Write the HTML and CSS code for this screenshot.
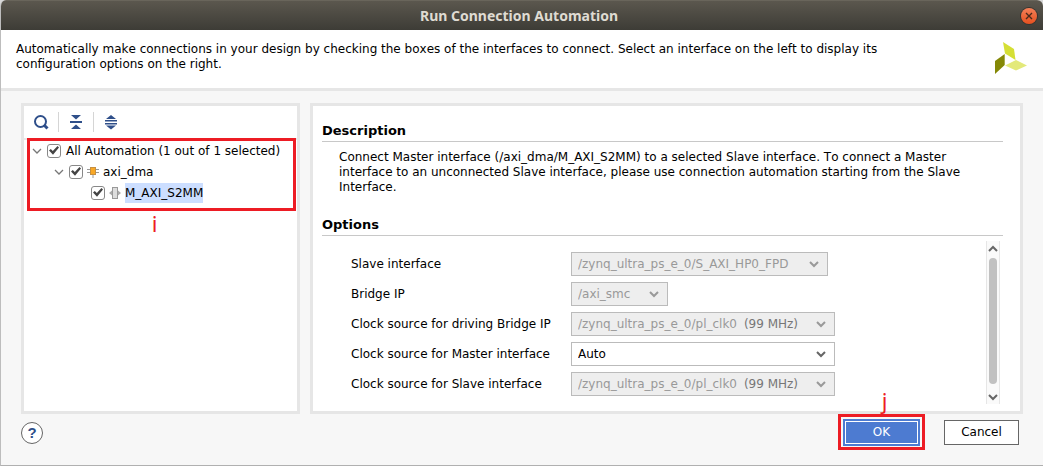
FILE: index.html
```html
<!DOCTYPE html>
<html lang="en">
<head>
<meta charset="utf-8">
<title>Run Connection Automation</title>
<link rel="stylesheet" href="styles.css">
</head>
<body>
<div class="dialog">
  <header class="titlebar">
    <h1 class="title">Run Connection Automation</h1>
    <button class="close" type="button" aria-label="Close">
      <svg width="8" height="8" viewBox="0 0 8 8"><path d="M1 1L7 7M7 1L1 7" stroke="#4a2a1c" stroke-width="1.4"/></svg>
    </button>
  </header>

  <section class="intro">
    <p class="intro-text">Automatically make connections in your design by checking the boxes of the interfaces to connect. Select an interface on the left to display its configuration options on the right.</p>
    <svg class="logo" width="32" height="32" viewBox="0 0 32 32" aria-hidden="true">
      <path d="M8 0L19 7L20.500 18L10 11.500Z" fill="#d5df35"/>
      <path d="M9.700 12V23L0 32V19Z" fill="#848806"/>
      <path d="M10 23.500L21 18L32 23.500L21 28.500Z" fill="#e3e97a"/>
    </svg>
  </section>

  <main class="content">
    <section class="panel tree-panel">
      <div class="toolbar">
        <button class="tool" type="button" aria-label="Search">
          <svg width="16" height="16" viewBox="0 0 16 16"><circle cx="7.500" cy="7.500" r="5.500" fill="none" stroke="#2f4f8a" stroke-width="2"/><path d="M11 11L14.500 14.500" stroke="#2f4f8a" stroke-width="3"/></svg>
        </button>
        <button class="tool" type="button" aria-label="Collapse all">
          <svg width="16" height="16" viewBox="0 0 16 16" fill="#2f4f8a"><path d="M3 1H13L8 5.500ZM2 7H14V9H2ZM8 10.500L13 15H3Z"/></svg>
        </button>
        <button class="tool" type="button" aria-label="Expand all">
          <svg width="16" height="16" viewBox="0 0 16 16" fill="#2f4f8a"><path d="M8 1L13 5H3ZM2 6H14V7.500H2ZM2 9H14V10.500H2ZM3 11.500H13L8 15.500Z"/></svg>
        </button>
      </div>
      <div class="tree">
        <div class="node">
          <svg class="twist" width="10" height="6" viewBox="0 0 10 6"><path d="M1 1L5 5L9 1" fill="none" stroke="#777" stroke-width="1.300"/></svg>
          <input class="check" type="checkbox" id="all" checked>
          <label class="node-label" for="all">All Automation (1 out of 1 selected)</label>
        </div>
        <div class="node level-1">
          <svg class="twist" width="10" height="6" viewBox="0 0 10 6"><path d="M1 1L5 5L9 1" fill="none" stroke="#777" stroke-width="1.300"/></svg>
          <input class="check" type="checkbox" id="dma" checked>
          <svg class="kind" width="12" height="12" viewBox="0 0 12 12"><path d="M0 3.500H12M0 6.500H12M6 9V12" stroke="#999"/><rect x="3.500" y="1.500" width="5" height="7" fill="#f9a825" stroke="#c69042"/></svg>
          <label class="node-label" for="dma">axi_dma</label>
        </div>
        <div class="node level-2">
          <input class="check" type="checkbox" id="s2mm" checked>
          <svg class="kind" width="12" height="12" viewBox="0 0 12 12"><path d="M0 6L3 3.500V8.500ZM12 6L9 3.500V8.500Z" fill="#aaa"/><rect x="3.500" y=".5" width="5" height="11" fill="#ddd" stroke="#999"/></svg>
          <label class="node-label selected" for="s2mm">M_AXI_S2MM</label>
        </div>
        <div class="callout callout-tree"><span class="callout-mark">i</span></div>
      </div>
    </section>

    <section class="panel detail-panel">
      <h2 class="heading">Description</h2>
      <p class="description">Connect Master interface (/axi_dma/M_AXI_S2MM) to a selected Slave interface. To connect a Master interface to an unconnected Slave interface, please use connection automation starting from the Slave Interface.</p>
      <h2 class="heading">Options</h2>
      <div class="options">
        <div class="fields">
          <label for="slave">Slave interface</label>
          <div class="combo combo-slave"><select id="slave" disabled><option>/zynq_ultra_ps_e_0/S_AXI_HP0_FPD</option></select><svg class="arrow" width="10" height="7" viewBox="0 0 10 7"><path d="M1 1L5 5L9 1"/></svg></div>
          <label for="bridge">Bridge IP</label>
          <div class="combo combo-bridge"><select id="bridge" disabled><option>/axi_smc</option></select><svg class="arrow" width="10" height="7" viewBox="0 0 10 7"><path d="M1 1L5 5L9 1"/></svg></div>
          <label for="clk-bridge">Clock source for driving Bridge IP</label>
          <div class="combo"><select id="clk-bridge" disabled><option>/zynq_ultra_ps_e_0/pl_clk0</option></select><span class="freq">(99 MHz)</span><svg class="arrow" width="10" height="7" viewBox="0 0 10 7"><path d="M1 1L5 5L9 1"/></svg></div>
          <label for="clk-master">Clock source for Master interface</label>
          <div class="combo"><select id="clk-master"><option>Auto</option></select><svg class="arrow" width="10" height="7" viewBox="0 0 10 7"><path d="M1 1L5 5L9 1"/></svg></div>
          <label for="clk-slave">Clock source for Slave interface</label>
          <div class="combo"><select id="clk-slave" disabled><option>/zynq_ultra_ps_e_0/pl_clk0</option></select><span class="freq">(99 MHz)</span><svg class="arrow" width="10" height="7" viewBox="0 0 10 7"><path d="M1 1L5 5L9 1"/></svg></div>
        </div>
        <div class="scrollbar" aria-hidden="true">
          <svg width="10" height="7" viewBox="0 0 10 7"><path d="M1 6L5 2L9 6"/></svg>
          <div class="thumb"></div>
          <svg width="10" height="7" viewBox="0 0 10 7"><path d="M1 1L5 5L9 1"/></svg>
        </div>
      </div>
    </section>
  </main>

  <footer class="footer">
    <button class="help" type="button" aria-label="Help">?</button>
    <div class="ok-wrap">
      <button class="button ok" type="button">OK</button>
      <div class="callout callout-ok"><span class="callout-mark">j</span></div>
    </div>
    <button class="button cancel" type="button">Cancel</button>
  </footer>
</div>
</body>
</html>
```

FILE: styles.css
```css
* { box-sizing: border-box; }

body {
  margin: 0;
  background: #d8d8d8;
  color: #000;
  font: 12px/15px "DejaVu Sans", sans-serif;
  font-kerning: none;
}

h1, h2, p { margin: 0; }

button, select { font: inherit; color: inherit; }

svg { display: block; flex: none; }

.dialog {
  display: flex;
  flex-direction: column;
  min-height: 100vh;
  border-left: 1px solid #bdbdbd;
  border-bottom: 1px solid #b0b0b0;
  border-radius: 6px 6px 0 0;
  background: #f7f7f7;
  overflow: hidden;
}

.titlebar {
  display: grid;
  grid-template-columns: 1fr auto 1fr;
  align-items: center;
  height: 30px;
  padding-right: 6px;
  border-top: 1px solid #69655b;
  background: linear-gradient(#5b574e, #3d3c36);
}

.title {
  grid-column: 2;
  color: #dfdbd2;
  font: bold 14px/20px "Noto Sans", sans-serif;
}

.close {
  display: grid;
  place-items: center;
  justify-self: end;
  width: 16px;
  height: 16px;
  padding: 0;
  border: 0;
  border-radius: 50%;
  background: linear-gradient(#f58058, #e5501f);
  box-shadow: 0 0 0 1px #38342f;
}

.intro {
  display: flex;
  justify-content: space-between;
  gap: 32px;
  min-height: 61px;
  padding: 12px 16px 12px 15px;
  border-bottom: 3px solid #e6e6e6;
  background: #fff;
}

.intro-text { max-width: 900px; }

.content {
  display: grid;
  grid-template-columns: 279px 1fr;
  flex: 1;
  gap: 10px;
  padding: 12px 20px 0;
}

.panel {
  min-width: 0;
  border: 3px solid #e6e6e6;
  background: #fff;
}

.toolbar {
  display: flex;
  align-items: center;
  height: 34px;
  border-bottom: 2px solid #e9e9e9;
}

.tool {
  display: grid;
  place-items: center;
  width: 35px;
  height: 20px;
  padding: 0;
  border: 0;
  background: none;
}

.tool:first-child { width: 34px; }
.tool + .tool { border-left: 1px solid #d5d5d5; }

.tree { position: relative; }

.node {
  display: flex;
  align-items: center;
  height: 21px;
  padding-left: 8px;
}

.level-1 { padding-left: 30px; }
.level-2 { padding-left: 67px; }

.check {
  display: grid;
  place-items: center;
  flex: none;
  appearance: none;
  width: 14px;
  height: 14px;
  margin: 0 5px 0 0;
  border: 1px solid #888;
  border-radius: 3px;
  background: #fff;
}

.check:checked::before {
  content: "";
  width: 10px;
  height: 10px;
  background: #444;
  clip-path: polygon(0 50%, 18% 35%, 38% 55%, 85% 5%, 100% 20%, 40% 92%);
}

.twist { margin-right: 5px; }
.kind { margin: 0 4px 0 -1px; }

.node-label { line-height: 20px; white-space: nowrap; }
.selected { background: #ccdeff; }

.callout {
  position: absolute;
  border: 3px solid #ed1c24;
  pointer-events: none;
}

.callout-tree { inset: -2px 1px -8px 3px; }
.callout-ok { inset: -5px -5px -4px; }

.callout-mark {
  position: absolute;
  left: 0;
  right: 0;
  color: #ed1c24;
  font: 22px/24px "Noto Sans", sans-serif;
  text-align: center;
}

.callout-tree .callout-mark { top: 100%; padding: 3px 14px 0 0; }
.callout-ok .callout-mark { bottom: 100%; padding: 0 0 5px 6px; }

.detail-panel {
  display: flex;
  flex-direction: column;
  padding: 17px 17px 7px 9px;
}

.heading {
  padding-bottom: 3px;
  border-bottom: 1px solid #c8c8c8;
  font-size: 13px;
  line-height: 15px;
}

.description {
  max-width: 677px;
  padding: 8px 0 22px 17px;
}

.options {
  display: flex;
  flex: 1;
  justify-content: space-between;
  padding: 5px 3px 0 29px;
}

.fields {
  display: grid;
  grid-template-columns: 220px 264px;
  grid-auto-rows: 24px;
  gap: 6px 0;
  align-content: start;
  align-items: center;
  padding-top: 11px;
}

.combo { position: relative; }
.combo-slave { width: 257px; }
.combo-bridge { width: 97px; }

.combo select {
  display: block;
  appearance: none;
  width: 100%;
  height: 24px;
  padding: 0 6px;
  border: 1px solid #bbb;
  border-radius: 0;
  background: #fff;
}

.combo select:disabled {
  background: #eee;
  color: #999;
  opacity: 1;
}

.freq {
  position: absolute;
  top: 5px;
  right: 37px;
  color: #777;
  pointer-events: none;
}

.arrow {
  position: absolute;
  top: 9px;
  right: 9px;
  pointer-events: none;
}

.arrow path, .scrollbar path { fill: none; stroke: #666; stroke-width: 2; }
.combo select:disabled ~ .arrow path { stroke: #999; }

.scrollbar {
  display: flex;
  flex-direction: column;
  align-items: center;
  gap: 6px;
  width: 14px;
  padding: 4px 0 3px;
  border: solid #e6e6e6;
  border-width: 0 1px;
  background: #fafafa;
}

.thumb {
  width: 8px;
  height: 126px;
  margin-bottom: auto;
  border-radius: 4px;
  background: #c1c1c1;
}

.footer {
  display: flex;
  align-items: center;
  gap: 24px;
  padding: 5px 24px 19px 20px;
}

.help {
  width: 22px;
  height: 22px;
  margin-right: auto;
  padding: 0;
  border: 1px solid #666;
  border-radius: 50%;
  background: #fff;
  color: #2f4f8a;
  font: bold 15px/20px "Liberation Sans", sans-serif;
}

.ok-wrap { position: relative; }

.button {
  display: block;
  width: 75px;
  height: 25px;
  padding: 0;
  border: 1px solid #666;
  background: #fff;
}

.ok {
  width: 77px;
  height: 27px;
  border: 0;
  outline: 1px solid #fff;
  outline-offset: -3px;
  background: #4d7bd1;
  color: #fff;
}
```
